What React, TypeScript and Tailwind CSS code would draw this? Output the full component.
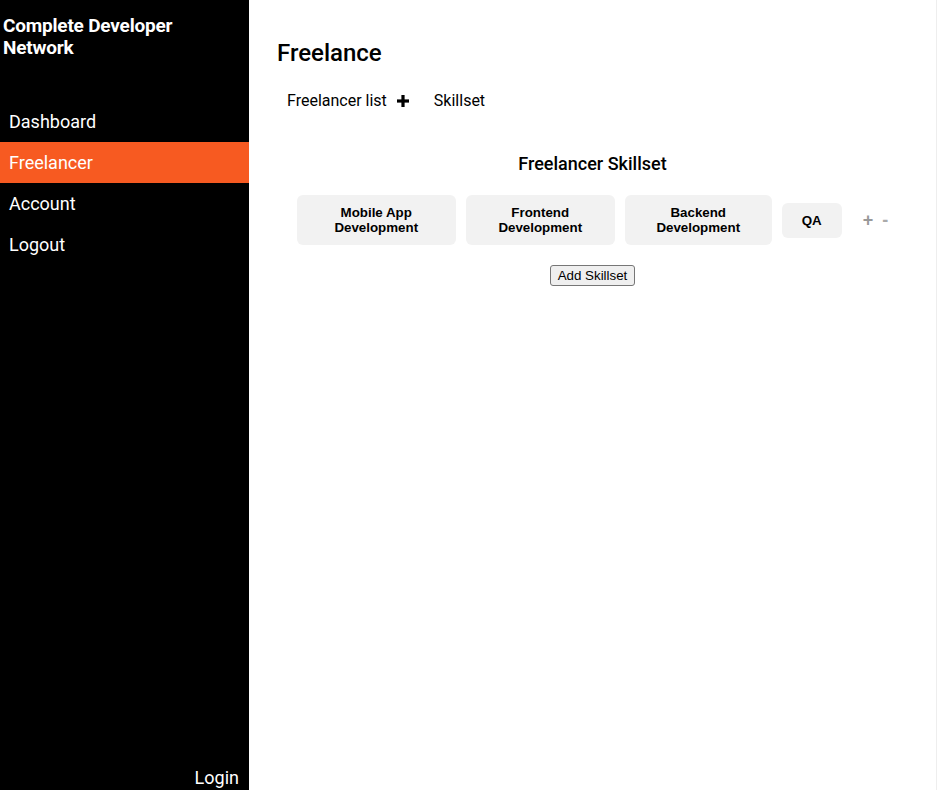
import React from "react";

const skills = [
  { label: ["Mobile App", "Development"], w: "w-[159px]" },
  { label: ["Frontend", "Development"], w: "w-[149px]" },
  { label: ["Backend", "Development"], w: "w-[147px]" },
];

export default function App() {
  return (
    <div className="flex h-screen w-full overflow-hidden bg-white font-['Roboto',sans-serif] text-black">
      <aside className="flex h-full w-[249px] shrink-0 flex-col bg-black text-white">
        <div className="pl-[3px] pt-[15px] text-[19px] font-bold leading-[22px] tracking-[-0.2px]">
          Complete Developer
          <br />
          Network
        </div>
        <nav className="mt-[42px] flex flex-col text-[18px]">
          <a className="block h-[41px] pl-[9px] leading-[41px]">Dashboard</a>
          <a className="block h-[41px] bg-[#f75a21] pl-[9px] leading-[41px]">Freelancer</a>
          <a className="block h-[41px] pl-[9px] leading-[41px]">Account</a>
          <a className="block h-[41px] pl-[9px] leading-[41px]">Logout</a>
        </nav>
        <div className="mt-auto pb-[2px] pr-[10px] text-right text-[18px] leading-[21px]">Login</div>
      </aside>
      <main className="flex h-full flex-1 flex-col pl-[28px] pt-[39px]">
        <h1 className="text-[24px] font-medium leading-[28px]">Freelance</h1>
        <div className="mt-[24px] flex items-center pl-[10px] text-[16px] leading-[19px]">
          <span>Freelancer list</span>
          <svg className="ml-[10px]" width="12" height="12" viewBox="0 0 12 12">
            <rect x="0" y="4.4" width="12" height="3.2" fill="#000" />
            <rect x="4.4" y="0" width="3.2" height="12" fill="#000" />
          </svg>
          <span className="ml-[25px]">Skillset</span>
        </div>
        <div className="-ml-[28px] mt-[43px] flex flex-col items-center">
          <h2 className="text-[18px] font-medium leading-[21px]">Freelancer Skillset</h2>
          <div className="mt-[21px] flex items-center font-['Liberation_Sans',Arial,sans-serif] text-[13.33px] font-bold leading-[15px]">
            <div className="flex items-center gap-[10px]">
              {skills.map((s) => (
                <div key={s.label[0]} className={`${s.w} rounded-[6px] bg-[#f2f2f2] py-[10px] text-center`}>
                  {s.label[0]}
                  <br />
                  {s.label[1]}
                </div>
              ))}
              <div className="rounded-[6px] bg-[#f2f2f2] px-[20px] py-[10px] text-center">QA</div>
            </div>
            <span className="ml-[21px] text-[18px] font-bold text-[#999]">+</span>
            <span className="ml-[9px] text-[18px] font-bold text-[#aaa]">-</span>
          </div>
          <button className="mt-[20px] rounded-[3px] border border-[#767676] bg-[#efefef] px-[7px] py-[2px] font-['Liberation_Sans',Arial,sans-serif] text-[13.33px] leading-[15px] text-black">
            Add Skillset
          </button>
        </div>
      </main>
      <div className="h-full w-px shrink-0 bg-[#eeeeee]" />
    </div>
  );
}
